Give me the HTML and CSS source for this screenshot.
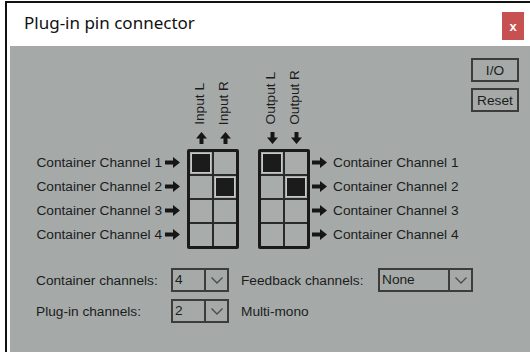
FILE: index.html
```html
<!DOCTYPE html>
<html lang="en">
<head>
    <meta charset="UTF-8">
    <meta name="viewport" content="width=device-width, initial-scale=1.0">
    <title>Plug-in pin connector</title>
    <link rel="stylesheet" href="styles.css">
</head>
<body>
    <div class="window">
        <div class="titlebar">
            <span class="title">Plug-in pin connector</span>
            <button class="close">x</button>
        </div>

        <div class="panel">
            <div class="top">
                <div class="matrix">
                    <div class="side left">
                        <div class="row">Container Channel 1 <svg class="arr-r" width="15" height="11" viewBox="0 0 15 11"><path d="M0 3.5h8V0l7 5.5-7 5.5V7.5H0z"/></svg></div>
                        <div class="row">Container Channel 2 <svg class="arr-r" width="15" height="11" viewBox="0 0 15 11"><path d="M0 3.5h8V0l7 5.5-7 5.5V7.5H0z"/></svg></div>
                        <div class="row">Container Channel 3 <svg class="arr-r" width="15" height="11" viewBox="0 0 15 11"><path d="M0 3.5h8V0l7 5.5-7 5.5V7.5H0z"/></svg></div>
                        <div class="row">Container Channel 4 <svg class="arr-r" width="15" height="11" viewBox="0 0 15 11"><path d="M0 3.5h8V0l7 5.5-7 5.5V7.5H0z"/></svg></div>
                    </div>

                    <div class="pins">
                        <div class="heads">
                            <div class="head">
                                <span class="vlabel">Input L</span>
                                <svg class="arr-v" width="11" height="12" viewBox="0 0 11 12"><path d="M5.5 0l5.5 6.5H7.5V12h-4V6.5H0z"/></svg>
                            </div>
                            <div class="head">
                                <span class="vlabel">Input R</span>
                                <svg class="arr-v" width="11" height="12" viewBox="0 0 11 12"><path d="M5.5 0l5.5 6.5H7.5V12h-4V6.5H0z"/></svg>
                            </div>
                        </div>
                        <div class="grid">
                            <div class="cell on"></div><div class="cell"></div>
                            <div class="cell"></div><div class="cell on"></div>
                            <div class="cell"></div><div class="cell"></div>
                            <div class="cell"></div><div class="cell"></div>
                        </div>
                    </div>

                    <div class="pins out">
                        <div class="heads">
                            <div class="head">
                                <span class="vlabel">Output L</span>
                                <svg class="arr-v" width="11" height="12" viewBox="0 0 11 12"><path d="M3.5 0h4v5.5H11L5.5 12 0 5.5h3.5z"/></svg>
                            </div>
                            <div class="head">
                                <span class="vlabel">Output R</span>
                                <svg class="arr-v" width="11" height="12" viewBox="0 0 11 12"><path d="M3.5 0h4v5.5H11L5.5 12 0 5.5h3.5z"/></svg>
                            </div>
                        </div>
                        <div class="grid">
                            <div class="cell on"></div><div class="cell"></div>
                            <div class="cell"></div><div class="cell on"></div>
                            <div class="cell"></div><div class="cell"></div>
                            <div class="cell"></div><div class="cell"></div>
                        </div>
                    </div>

                    <div class="side right">
                        <div class="row"><svg class="arr-r" width="15" height="11" viewBox="0 0 15 11"><path d="M0 3.5h8V0l7 5.5-7 5.5V7.5H0z"/></svg> Container Channel 1</div>
                        <div class="row"><svg class="arr-r" width="15" height="11" viewBox="0 0 15 11"><path d="M0 3.5h8V0l7 5.5-7 5.5V7.5H0z"/></svg> Container Channel 2</div>
                        <div class="row"><svg class="arr-r" width="15" height="11" viewBox="0 0 15 11"><path d="M0 3.5h8V0l7 5.5-7 5.5V7.5H0z"/></svg> Container Channel 3</div>
                        <div class="row"><svg class="arr-r" width="15" height="11" viewBox="0 0 15 11"><path d="M0 3.5h8V0l7 5.5-7 5.5V7.5H0z"/></svg> Container Channel 4</div>
                    </div>
                </div>

                <div class="buttons">
                    <button class="btn">I/O</button>
                    <button class="btn">Reset</button>
                </div>
            </div>

            <div class="controls">
                <span class="label">Container channels:</span>
                <div class="combo"><span class="value">4</span><span class="drop"><svg width="12" height="7" viewBox="0 0 12 7"><polyline points="0.5,0.5 6,6 11.5,0.5"/></svg></span></div>
                <span class="label pad">Feedback channels:</span>
                <div class="combo"><span class="value">None</span><span class="drop"><svg width="12" height="7" viewBox="0 0 12 7"><polyline points="0.5,0.5 6,6 11.5,0.5"/></svg></span></div>

                <span class="label">Plug-in channels:</span>
                <div class="combo"><span class="value">2</span><span class="drop"><svg width="12" height="7" viewBox="0 0 12 7"><polyline points="0.5,0.5 6,6 11.5,0.5"/></svg></span></div>
                <span class="label pad">Multi-mono</span>
            </div>
        </div>
    </div>
</body>
</html>
```

FILE: styles.css
```css
body {
    margin: 0;
    background: #fff;
    font-family: "Liberation Sans", Arial, sans-serif;
    font-size: 13.7px;
    color: #1c1c1c;
}
.window {
    margin: 1px 0 0 5px;
    border-top: 2px solid #111;
    border-left: 2px solid #111;
}
.titlebar {
    height: 43px;
    display: flex;
    align-items: center;
    justify-content: space-between;
    padding: 0 6px 0 17px;
    background: #fff;
}
.title {
    font-family: "Noto Sans", sans-serif;
    font-size: 17px;
    color: #111;
    margin-top: -4px;
}
.close {
    width: 22px;
    height: 28px;
    margin-top: 3px;
    border: none;
    background: #c75050;
    color: #fff;
    font-family: "Liberation Sans", Arial, sans-serif;
    font-weight: bold;
    font-size: 13px;
    padding: 0;
}
.panel {
    margin-left: 3px;
    height: 306px;
    background: #a5aaa9;
    padding: 12px 11px 0 26px;
    box-sizing: border-box;
}
.top {
    display: flex;
    align-items: flex-start;
}
.matrix {
    display: flex;
    align-items: flex-end;
}
.side {
    display: flex;
    flex-direction: column;
    gap: 2px;
    padding: 3px 0;
}
.side .row {
    height: 22px;
    display: flex;
    align-items: center;
    white-space: nowrap;
    margin-top: -1px;
    margin-bottom: 1px;
}
.side.left {
    width: 151px;
    align-items: flex-end;
}
.side.left .arr-r {
    margin: 0 7px 0 3px;
}
.side.right .arr-r {
    margin: 0 6px 0 2px;
}
.pins {
    display: flex;
    flex-direction: column;
}
.pins.out {
    margin-left: 19px;
}
.heads {
    height: 91px;
    display: flex;
    align-items: flex-end;
    gap: 2px;
    padding: 0 3px;
}
.head {
    width: 22px;
    display: flex;
    flex-direction: column;
    align-items: center;
}
.vlabel {
    writing-mode: vertical-rl;
    transform: rotate(180deg);
    line-height: 14px;
    margin-left: -2px;
    white-space: nowrap;
}
.arr-v {
    margin: 7px 0 5px;
}
svg path {
    fill: #161616;
}
.grid {
    display: grid;
    grid-template-columns: 22px 22px;
    grid-auto-rows: 22px;
    gap: 2px;
    border: 3px solid #1a1a1a;
    border-radius: 2px;
    background: #2a2a2a;
}
.cell {
    background: #a8adac;
}
.cell.on {
    background: #1b1b1b;
    box-shadow: inset 0 0 0 1px #c6c9c8;
    border: 1px solid #a8adac;
}
.buttons {
    margin-left: auto;
    display: flex;
    flex-direction: column;
    gap: 6px;
}
.btn {
    width: 48px;
    height: 24px;
    border: 2px solid #3c3c3c;
    background: #a5aaa9;
    font-family: "Liberation Sans", Arial, sans-serif;
    font-size: 13.7px;
    color: #1c1c1c;
    padding: 0;
}
.controls {
    margin-top: 19px;
    display: grid;
    grid-template-columns: 135px 58px 149px 95px;
    grid-auto-rows: 24px;
    row-gap: 7px;
    align-items: center;
    white-space: nowrap;
}
.label.pad {
    padding-left: 12px;
}
.combo {
    height: 24px;
    box-sizing: border-box;
    border: 2px solid #3c3c3c;
    display: flex;
}
.combo .value {
    flex: 1;
    padding-left: 2px;
    line-height: 20px;
}
.combo .drop {
    width: 21px;
    border-left: 2px solid #3c3c3c;
    display: flex;
    align-items: center;
    justify-content: center;
}
.combo polyline {
    fill: none;
    stroke: #4a4a4a;
    stroke-width: 1.3;
}
```
